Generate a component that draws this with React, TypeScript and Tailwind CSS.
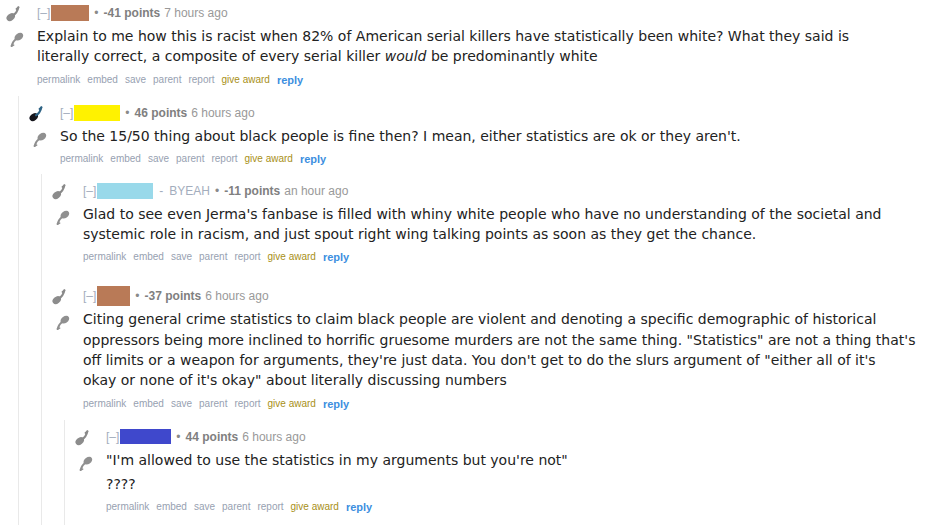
import React from "react";

const body = { fontFamily: '"DejaVu Sans", Verdana, sans-serif' };
const arial = { fontFamily: '"Liberation Sans", Arial, sans-serif' };

function UpArrow({ dark = false }: { dark?: boolean }) {
  const blob = dark ? "#18181e" : "#787878";
  const tail = dark ? "#2f6485" : "#8a8a8a";
  const id = dark ? "blurUpD" : "blurUp";
  return (
    <svg width="15" height="17" viewBox="0 0 14 16" className="block">
      <defs>
        <filter id={id} x="-20%" y="-20%" width="140%" height="140%">
          <feGaussianBlur stdDeviation="0.45" />
        </filter>
      </defs>
      <g filter={`url(#${id})`}>
        <ellipse cx="4.4" cy="11.4" rx="4.4" ry="3.2" transform="rotate(-40 4.4 11.4)" fill={blob} opacity={dark ? 1 : 0.85} />
        <path d="M6.6 9.6 Q 10.4 7.6 11.6 2.2" stroke={tail} strokeWidth="2" fill="none" strokeLinecap="round" />
        <path d="M11.6 2.2 L 9.8 3.7" stroke={tail} strokeWidth="1.7" fill="none" strokeLinecap="round" />
      </g>
    </svg>
  );
}

function DownArrow() {
  return (
    <svg width="15" height="16" viewBox="0 0 14 15" className="block">
      <defs>
        <filter id="blurDown" x="-20%" y="-20%" width="140%" height="140%">
          <feGaussianBlur stdDeviation="0.45" />
        </filter>
      </defs>
      <g filter="url(#blurDown)">
        <ellipse cx="9.2" cy="4.4" rx="4.5" ry="3.1" transform="rotate(-35 9.2 4.4)" fill="#7d7d7d" opacity="0.85" />
        <path d="M6.6 6.6 Q 3.4 8.8 2.4 13.2" stroke="#8f8f8f" strokeWidth="1.8" fill="none" strokeLinecap="round" />
        <path d="M2.4 13.2 L 4.3 12.3" stroke="#8f8f8f" strokeWidth="1.5" fill="none" strokeLinecap="round" />
      </g>
    </svg>
  );
}

function Tagline({
  boxColor,
  boxW,
  boxH = 16,
  flair,
  points,
  time,
}: {
  boxColor: string;
  boxW: number;
  boxH?: number;
  flair?: string;
  points: string;
  time: string;
}) {
  return (
    <div className="flex items-center h-[16px] text-[12px] leading-[16px] whitespace-nowrap" style={arial}>
      <span className="text-[#a3adbd]">[–]</span>
      <span className="inline-block ml-[1px]" style={{ width: boxW, height: boxH, backgroundColor: boxColor }} />
      {flair && (
        <>
          <span className="ml-[6px] text-[#a3adbd]">-</span>
          <span className="ml-[6px] text-[#a3adbd]">{flair}</span>
        </>
      )}
      <span className="ml-[5px] text-[#8a8a8a]">•</span>
      <span className="ml-[5px] font-bold text-[#808080]">{points}</span>
      <span className="ml-[4px] text-[#999]">{time}</span>
    </div>
  );
}

function Buttons() {
  return (
    <div className="flex items-center h-[14px] text-[10px] leading-[14px] whitespace-nowrap" style={arial}>
      <span className="text-[#97a1b1]">permalink</span>
      <span className="ml-[7px] text-[#97a1b1]">embed</span>
      <span className="ml-[7px] text-[#97a1b1]">save</span>
      <span className="ml-[7px] text-[#97a1b1]">parent</span>
      <span className="ml-[7px] text-[#97a1b1]">report</span>
      <span className="ml-[7px] text-[#a88f17]">give award</span>
      <span className="ml-[7px] text-[11px] font-bold text-[#3d8fe0]">reply</span>
    </div>
  );
}

function Comment({
  tag,
  lines,
  extra,
  darkUp = false,
}: {
  tag: React.ReactNode;
  lines: React.ReactNode[];
  extra?: React.ReactNode[];
  darkUp?: boolean;
}) {
  return (
    <div className="flex">
      <div className="w-[37px] shrink-0 pl-[6px] flex flex-col">
        <UpArrow dark={darkUp} />
        <div className="mt-[10px] ml-[3px]">
          <DownArrow />
        </div>
      </div>
      <div className="flex flex-col">
        {tag}
        <div className="mt-[5px] text-[14px] leading-[20.3px] text-[#222] whitespace-nowrap" style={body}>
          <p>
            {lines.map((l, i) => (
              <React.Fragment key={i}>
                {l}
                {i < lines.length - 1 && <br />}
              </React.Fragment>
            ))}
          </p>
          {extra &&
            extra.map((e, i) => (
              <p key={i} className="mt-[4px]">
                {e}
              </p>
            ))}
        </div>
        <div className="mt-[6px]">
          <Buttons />
        </div>
      </div>
    </div>
  );
}

export default function App() {
  return (
    <div className="w-[938px] h-[525px] overflow-hidden bg-white">
      <div className="pt-[5px]">
        <Comment
          tag={<Tagline boxColor="#b97a57" boxW={38} points="-41 points" time="7 hours ago" />}
          lines={[
            "Explain to me how this is racist when 82% of American serial killers have statistically been white? What they said is",
            <>
              literally correct, a composite of every serial killer <em>would</em> be predominantly white
            </>,
          ]}
        />
        <div className="ml-[18px] mt-[9px] border-l border-[#e9e9e9] pl-[4px] pt-[9px] pb-[200px]">
          <Comment
            darkUp
            tag={<Tagline boxColor="#fff200" boxW={46} points="46 points" time="6 hours ago" />}
            lines={[
              "So the 15/50 thing about black people is fine then? I mean, either statistics are ok or they aren't.",
            ]}
          />
          <div className="ml-[18px] mt-[8px] border-l border-[#e9e9e9] pl-[4px] pt-[9px] pb-[200px]">
            <Comment
              tag={
                <Tagline boxColor="#99d9ea" boxW={56} flair="BYEAH" points="-11 points" time="an hour ago" />
              }
              lines={[
                "Glad to see even Jerma's fanbase is filled with whiny white people who have no understanding of the societal and",
                "systemic role in racism, and just spout right wing talking points as soon as they get the chance.",
              ]}
            />
            <div className="mt-[24px]">
              <Comment
                tag={<Tagline boxColor="#b97a57" boxW={33} boxH={20} points="-37 points" time="6 hours ago" />}
                lines={[
                  "Citing general crime statistics to claim black people are violent and denoting a specific demographic of historical",
                  "oppressors being more inclined to horrific gruesome murders are not the same thing. \"Statistics\" are not a thing that's",
                  "off limits or a weapon for arguments, they're just data. You don't get to do the slurs argument of \"either all of it's",
                  "okay or none of it's okay\" about literally discussing numbers",
                ]}
              />
              <div className="ml-[18px] mt-[9px] border-l border-[#e9e9e9] pl-[4px] pt-[9px] pb-[200px]">
                <Comment
                  tag={<Tagline boxColor="#3f48cc" boxW={51} boxH={15} points="44 points" time="6 hours ago" />}
                  lines={["\"I'm allowed to use the statistics in my arguments but you're not\""]}
                  extra={["????"]}
                />
              </div>
            </div>
          </div>
        </div>
      </div>
    </div>
  );
}
